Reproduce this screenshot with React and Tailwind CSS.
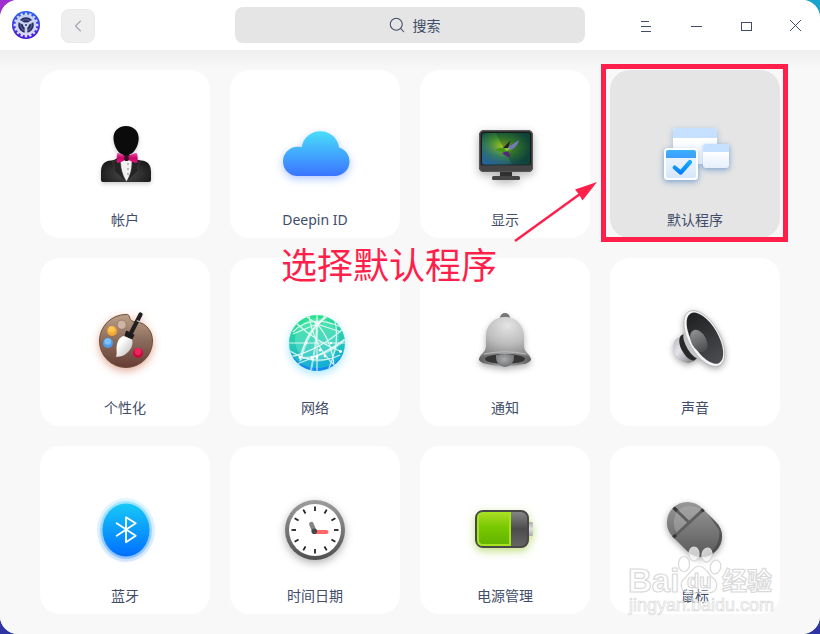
import { ChevronLeft, Search } from 'lucide-react';

const CLOCK_TICKS = Array.from({ length: 12 }, (_, i) => i * 30);
const GEAR_TEETH = Array.from({ length: 16 }, (_, i) => i * 22.5);

function AppLogo() {
  return (
    <svg viewBox="0 0 28 28" className="h-7 w-7" aria-hidden="true">
      <defs>
        <linearGradient id="logoBg" x1="0" y1="0" x2="0" y2="1">
          <stop offset="0" stopColor="#2a62f5" />
          <stop offset="1" stopColor="#4a12d8" />
        </linearGradient>
        <linearGradient id="logoGear" x1="0" y1="0" x2="0" y2="1">
          <stop offset="0" stopColor="#c3d2f2" />
          <stop offset="1" stopColor="#d9d5f4" />
        </linearGradient>
      </defs>
      <circle cx="14" cy="14" r="14" fill="url(#logoBg)" />
      {GEAR_TEETH.map((deg) => (
        <rect key={deg} x="12.8" y="1.6" width="2.4" height="3.5" fill="#d2daf5" transform={`rotate(${deg} 14 14)`} />
      ))}
      <circle cx="14" cy="14" r="9.2" fill="#252b62" stroke="url(#logoGear)" strokeWidth="2.8" />
      <circle cx="14" cy="14" r="5.5" fill="none" stroke="#535b8d" strokeWidth="1.4" />
      <path d="M14 14 L6.5 9.6 M14 14 L21.5 9.6 M14 14 V22.5" stroke="#cdd3ef" strokeWidth="2.6" />
      <circle cx="14" cy="14" r="2.8" fill="#cdd3ef" />
      <circle cx="14" cy="14" r="1.1" fill="#333b7c" />
    </svg>
  );
}

function AccountIcon() {
  return (
    <>
      <defs>
        <radialGradient id="suit" cx="0.5" cy="0.7" r="0.6">
          <stop offset="0" stopColor="#4a4a4a" />
          <stop offset="1" stopColor="#171717" />
        </radialGradient>
        <linearGradient id="bow" x1="0" y1="0" x2="0" y2="1">
          <stop offset="0" stopColor="#f54aa6" />
          <stop offset="0.5" stopColor="#c50868" />
          <stop offset="1" stopColor="#e4147f" />
        </linearGradient>
      </defs>
      <path d="M16 65 V57 C16 50 19 46 26 45.5 C31 45 34 42 36 40 H46 C48 43 51 45 56 45.5 C63 46 66 50 66 57 V65 Q66 67 64 67 H18 Q16 67 16 65Z" fill="url(#suit)" />
      <path d="M34.5 43 H48 C48 52 45.5 60 41.5 66.5 C37.5 60 35 52 34.5 43Z" fill="#f1f1f1" />
      <path d="M33 45 L27 46.5 L30 53 L28.5 55 L41 67 C37 60 35.5 53 35.5 45Z M49 45 L55 46.5 L52 53 L54 55 L41.5 67 C46 60 47 53 47 45Z" fill="#242424" stroke="#484848" strokeWidth="0.5" />
      <path d="M41 11 C49 11 54 16.5 53.7 24 C53.3 32 48 40.5 41 40.5 C34 40.5 29 32 28.5 24 C28 16.5 33 11 41 11Z" fill="#0b0b0b" />
      <path d="M32.5 38 C35.5 38.5 37.5 40 40 41 H43 C45.5 40 48 38.5 51.5 38 C53 40 53 45 52 48 C48 47.5 46 46 43 45 H40 C37.5 46.5 35 47.5 32 48 C31.5 45 31.5 41 32.5 38Z" fill="url(#bow)" />
      <rect x="39.3" y="40.5" width="4.4" height="5.4" rx="1.5" fill="#351323" />
      <g fill="#a9a9a9">
        <circle cx="43" cy="49" r="1" />
        <circle cx="43" cy="54" r="1" />
        <circle cx="43" cy="59" r="1" />
      </g>
    </>
  );
}

function CloudIcon() {
  return (
    <>
      <defs>
        <linearGradient id="cloud" x1="0" y1="17" x2="0" y2="61" gradientUnits="userSpaceOnUse">
          <stop offset="0" stopColor="#49dcfb" />
          <stop offset="1" stopColor="#3a74ff" />
        </linearGradient>
      </defs>
      <path d="M22.6 61 A14.6 14.6 0 0 1 22.6 31.8 L26.8 32 A18.8 18.8 0 0 1 64 32.4 A14.6 14.6 0 0 1 59.5 61Z" fill="url(#cloud)" />
    </>
  );
}

function DisplayIcon() {
  return (
    <>
      <defs>
        <radialGradient id="screen" cx="0.42" cy="0.45" r="0.6">
          <stop offset="0" stopColor="#a3c81e" />
          <stop offset="0.5" stopColor="#3f8a32" />
          <stop offset="1" stopColor="#134c46" />
        </radialGradient>
        <linearGradient id="screenBlue" x1="0" y1="1" x2="1" y2="0">
          <stop offset="0" stopColor="#2c68ac" stopOpacity="0.95" />
          <stop offset="0.5" stopColor="#2c68ac" stopOpacity="0" />
        </linearGradient>
      </defs>
      <rect x="35" y="55" width="12" height="7" fill="#303030" />
      <rect x="27" y="61" width="28" height="4" rx="1.5" fill="#454545" />
      <rect x="14" y="15" width="54" height="42" rx="5" fill="#393939" />
      <path d="M14 51 H68 V52 Q68 57 63 57 H19 Q14 57 14 52Z" fill="#444" />
      <rect x="14.5" y="15.5" width="53" height="41" rx="4.5" fill="none" stroke="#585858" />
      <rect x="16" y="17" width="50" height="33" rx="3" fill="#141b18" />
      <rect x="17" y="18" width="48" height="31.5" rx="2.5" fill="url(#screen)" />
      <rect x="17" y="18" width="48" height="31.5" rx="2.5" fill="url(#screenBlue)" />
      <path d="M31 18 H62.5 Q65 18 65 20.5 V47 Q65 49.5 62.5 49.5 H47Z" fill="#06301f" opacity="0.3" />
      <path d="M42 33 L54 25 C53 30 49 34 43 36Z" fill="#7379b9" />
      <path d="M38 33 L45.5 25.5 L43 33Z" fill="#241c35" />
      <path d="M29.5 36 C33 32.5 37 32 40 33.5 L46 35 L42 41 C39 38 37 36 29.5 36Z" fill="#46971c" />
      <path d="M37 38 L43 36 L45.5 42 L42 41.5Z" fill="#56247f" />
      <path d="M39 33.5 L45 33 L42 36.5Z" fill="#8fcb32" />
    </>
  );
}

function DefaultAppsIcon() {
  return (
    <>
      <defs>
        <linearGradient id="pane" x1="0" y1="0" x2="0" y2="1">
          <stop offset="0.3" stopColor="#ffffff" />
          <stop offset="1" stopColor="#e6effb" />
        </linearGradient>
        <linearGradient id="paneFront" x1="0" y1="0" x2="0" y2="1">
          <stop offset="0" stopColor="#f3f8fe" />
          <stop offset="1" stopColor="#d6e7fa" />
        </linearGradient>
        <linearGradient id="paneBar" x1="0" y1="0" x2="0" y2="1">
          <stop offset="0" stopColor="#3ab1ff" />
          <stop offset="1" stopColor="#409cff" />
        </linearGradient>
        <linearGradient id="tick" x1="0" y1="46" x2="0" y2="59" gradientUnits="userSpaceOnUse">
          <stop offset="0" stopColor="#13b0ff" />
          <stop offset="1" stopColor="#0779ff" />
        </linearGradient>
      </defs>
      <rect x="18" y="13" width="44" height="36" rx="3" fill="url(#pane)" />
      <path d="M18 23 V16 Q18 13 21 13 H59 Q62 13 62 16 V23Z" fill="#c6e0ff" />
      <g className="drop-shadow-[0_1px_2px_rgba(60,120,190,0.3)]">
        <rect x="48" y="29" width="26" height="24" rx="3" fill="url(#pane)" />
        <path d="M48 37 V32 Q48 29 51 29 H71 Q74 29 74 32 V37Z" fill="#c6e0ff" />
      </g>
      <g className="drop-shadow-[0_1px_2px_rgba(60,120,190,0.3)]">
        <rect x="9" y="33" width="34" height="32" rx="3.5" fill="#fff" />
        <rect x="11" y="35" width="30" height="28" rx="2" fill="url(#paneFront)" />
        <path d="M11 43 V37 Q11 35 13 35 H39 Q41 35 41 37 V43Z" fill="url(#paneBar)" />
      </g>
      <path d="M19.7 52.5 L25.7 57.6 L35 47" fill="none" stroke="url(#tick)" strokeWidth="4.2" strokeLinecap="round" strokeLinejoin="round" />
    </>
  );
}

function PersonalizationIcon() {
  return (
    <>
      <defs>
        <linearGradient id="palette" x1="0" y1="0" x2="0" y2="1">
          <stop offset="0" stopColor="#bb9f86" />
          <stop offset="0.5" stopColor="#8a6b5b" />
          <stop offset="1" stopColor="#663c34" />
        </linearGradient>
        <linearGradient id="bristle" x1="0" y1="0" x2="1" y2="1">
          <stop offset="0.3" stopColor="#ffffff" />
          <stop offset="1" stopColor="#b9b5b3" />
        </linearGradient>
      </defs>
      <path d="M41 11.5 C44 11 44 13 45 15.5 C46.5 19 49 18.5 52 19 C61 20 67.5 28 67.5 38 A26.5 26.5 0 1 1 41 11.5Z" fill="url(#palette)" stroke="#704e37" />
      <circle cx="36.7" cy="21.7" r="4.6" fill="#cfb4a6" stroke="#9b7c6a" />
      <circle cx="27" cy="28" r="5" fill="#f5a72f" />
      <circle cx="26.5" cy="26.5" r="3.2" fill="#ffc553" />
      <circle cx="23" cy="40" r="5" fill="#4e9eed" />
      <circle cx="22.7" cy="38.5" r="3.3" fill="#7cc0ff" />
      <circle cx="53" cy="50" r="5" fill="#c90b3c" />
      <circle cx="53" cy="48.5" r="3.4" fill="#ef2360" />
      <path d="M46.5 29 L55.5 11.5" stroke="#202020" strokeWidth="4.2" strokeLinecap="round" />
      <path d="M51.8 17.5 L55 19.2" stroke="#bdbdbd" strokeWidth="1.4" />
      <path d="M41.5 28 L49 32 L47 36 L40 32.5Z" fill="#1d1d1d" stroke="#1d1d1d" strokeLinejoin="round" />
      <path d="M38.5 33 L47 36.5 C48.5 41 46.5 45.5 43 49 C39.5 52.5 36 54 31 53.8 C32.5 50 31 47 31.8 42.5 C33 37 35 34 38.5 33Z" fill="url(#bristle)" />
    </>
  );
}

function NetworkIcon() {
  return (
    <>
      <defs>
        <linearGradient id="globe" x1="0.4" y1="0" x2="0.55" y2="1">
          <stop offset="0" stopColor="#2be38c" />
          <stop offset="0.5" stopColor="#27c9b7" />
          <stop offset="1" stopColor="#13aadc" />
        </linearGradient>
        <clipPath id="globeClip">
          <circle cx="42" cy="40" r="28" />
        </clipPath>
      </defs>
      <circle cx="42" cy="40" r="28" fill="url(#globe)" />
      <g clipPath="url(#globeClip)" fill="none" stroke="#fff" strokeWidth="1.2">
        <circle cx="42" cy="37" r="22" fill="#8df0d5" stroke="none" opacity="0.35" />
        <path d="M14 44 A28 28 0 0 0 70 44 A28.5 26 0 0 1 14 44Z" fill="#1588ef" stroke="none" />
        <g opacity="0.8">
          <path d="M14 40 H70 M42 12 V68" />
          <path d="M42 21 Q28 36 25 58 M42 21 Q56 36 59 62 M42 21 L18 31 M42 21 L66 29" />
          <path d="M34 12 Q38 42 60 63 M50 12 Q47 20 42 21 M32 14 L42 21 M52 14 L42 21" />
          <path d="M15 54 Q45 47 69 25 M22 61 Q50 51 70 36 M15 48 Q40 64 65 52" />
          <path d="M21 20 Q43 40 65 48 M18 29 Q35 10 66 24 M60 18 Q65 40 54 65" />
        </g>
        <path d="M26 57 Q31 30 52 12 M42 21 Q41 45 36 67 M25 55 Q47 56 70 37" opacity="0.6" strokeWidth="2" />
      </g>
      <g fill="#fff">
        <circle cx="42" cy="21" r="2" />
        <circle cx="31" cy="40" r="1.4" />
        <circle cx="45" cy="47" r="1.6" />
        <circle cx="25" cy="54.5" r="1.4" />
        <circle cx="37" cy="54.5" r="1.4" />
        <circle cx="42" cy="54.5" r="1.4" />
        <circle cx="50" cy="53" r="1.4" />
        <circle cx="65.5" cy="48.5" r="1.4" />
        <circle cx="56" cy="40" r="1.2" />
      </g>
    </>
  );
}

function NotificationIcon() {
  return (
    <>
      <defs>
        <radialGradient id="bell" cx="0.55" cy="0.2" r="0.85">
          <stop offset="0" stopColor="#e4e4e4" />
          <stop offset="0.5" stopColor="#bdbdbd" />
          <stop offset="1" stopColor="#777" />
        </radialGradient>
        <linearGradient id="bellLip" x1="0" y1="0" x2="1" y2="0">
          <stop offset="0" stopColor="#5f5f5f" />
          <stop offset="0.5" stopColor="#a5a5a5" />
          <stop offset="1" stopColor="#5f5f5f" />
        </linearGradient>
        <radialGradient id="clapper" cx="0.45" cy="0.4" r="0.6">
          <stop offset="0" stopColor="#a9abac" />
          <stop offset="1" stopColor="#707274" />
        </radialGradient>
      </defs>
      <circle cx="40" cy="15" r="5" fill="#777" />
      <path d="M40 14 C51 14 59 22 59 33 V43 C59 50 66 51 66 57 H14 C14 51 21 50 21 43 V33 C21 22 29 14 40 14Z" fill="url(#bell)" />
      <ellipse cx="40" cy="56.5" rx="26" ry="6.5" fill="url(#bellLip)" />
      <path d="M19 51 Q40 46.5 61 51" fill="none" stroke="#bdbdbd" />
      <ellipse cx="40" cy="56" rx="20" ry="5" fill="#353535" />
      <path d="M31 52 Q40 50 49 52 V55 A9 9 0 0 1 31 55Z" fill="url(#clapper)" />
    </>
  );
}

function SoundIcon() {
  return (
    <>
      <defs>
        <linearGradient id="magnet" x1="0" y1="0" x2="1" y2="1">
          <stop offset="0" stopColor="#b4b4ba" />
          <stop offset="0.4" stopColor="#e4e4ea" />
          <stop offset="1" stopColor="#77777d" />
        </linearGradient>
        <linearGradient id="cone" x1="0" y1="0" x2="1" y2="0">
          <stop offset="0" stopColor="#1f2022" />
          <stop offset="1" stopColor="#4c4d50" />
        </linearGradient>
        <linearGradient id="dome" x1="0" y1="0" x2="1" y2="0">
          <stop offset="0" stopColor="#8f9092" />
          <stop offset="1" stopColor="#4a4b4d" />
        </linearGradient>
      </defs>
      <path d="M25 34 C20 35 17.5 41 18.5 47 C20 54 27 60 34 60 L39 58Z" fill="url(#magnet)" />
      <path d="M26 32.5 C23 36 24 43 28 49 C31 54 35 58 39.5 57.5 L42 55 L29 31Z" fill="#28292b" />
      <path d="M32 9 C30 17 29 25 28.5 32 C27 38 36 54 42 55 C48 58 54 61 60 63Z" fill="#c6c6c9" />
      <g transform="rotate(60 49.3 35.5)">
        <ellipse cx="49.3" cy="35.5" rx="31" ry="15.5" fill="#f5f5f5" stroke="#b9b9b9" strokeWidth="0.8" />
        <ellipse cx="49.3" cy="34.8" rx="28.6" ry="13.2" fill="url(#cone)" />
      </g>
      <ellipse cx="43.8" cy="38" rx="12" ry="7.5" fill="url(#dome)" transform="rotate(62 43.8 38)" />
    </>
  );
}

function BluetoothIcon() {
  return (
    <>
      <defs>
        <linearGradient id="bt" x1="0" y1="0" x2="0" y2="1">
          <stop offset="0" stopColor="#17c9f7" />
          <stop offset="1" stopColor="#006fff" />
        </linearGradient>
      </defs>
      <ellipse cx="41" cy="39" rx="29" ry="32" fill="url(#bt)" opacity="0.13" />
      <ellipse cx="41" cy="39" rx="26" ry="29" fill="url(#bt)" opacity="0.28" />
      <ellipse cx="41" cy="39" rx="23.5" ry="26.5" fill="url(#bt)" />
      <path d="M31.7 32.3 L50.7 44.7 L41 51.3 V26.3 L50.7 32.3 L31.7 44.7" fill="none" stroke="#fff" strokeWidth="1.8" strokeLinecap="round" strokeLinejoin="round" />
    </>
  );
}

function ClockIcon() {
  return (
    <>
      <defs>
        <linearGradient id="bezel" x1="0" y1="0" x2="0" y2="1">
          <stop offset="0" stopColor="#9d9d9d" />
          <stop offset="1" stopColor="#505050" />
        </linearGradient>
      </defs>
      <circle cx="40" cy="39" r="30" fill="url(#bezel)" />
      <circle cx="40" cy="39" r="26" fill="#fff" />
      {CLOCK_TICKS.map((deg) => (
        <path key={deg} d="M40 15.5 V20" stroke="#222" strokeWidth="1.8" transform={`rotate(${deg} 40 39)`} />
      ))}
      <path d="M39.5 41 H51.5" stroke="#ff6767" strokeWidth="4" strokeLinecap="round" />
      <path d="M39.3 40 L36.3 33" stroke="#858585" strokeWidth="4.5" strokeLinecap="round" />
      <circle cx="39.3" cy="40.3" r="2.8" fill="#474747" />
    </>
  );
}

function BatteryIcon() {
  return (
    <>
      <defs>
        <linearGradient id="shell" x1="0" y1="0" x2="0" y2="1">
          <stop offset="0" stopColor="#888" />
          <stop offset="0.5" stopColor="#4c4c4c" />
          <stop offset="1" stopColor="#666" />
        </linearGradient>
        <linearGradient id="charge" x1="0" y1="0" x2="0" y2="1">
          <stop offset="0" stopColor="#a9dc24" />
          <stop offset="0.45" stopColor="#78c800" />
          <stop offset="1" stopColor="#62b400" />
        </linearGradient>
        <linearGradient id="cap" x1="0" y1="0" x2="0" y2="1">
          <stop offset="0" stopColor="#aaa" />
          <stop offset="0.5" stopColor="#e0e0e0" />
          <stop offset="1" stopColor="#aaa" />
        </linearGradient>
      </defs>
      <rect x="62" y="31" width="6" height="14" rx="1.5" fill="url(#cap)" />
      <rect x="11" y="20" width="52" height="36" rx="7" fill="url(#shell)" stroke="#484848" strokeWidth="2" />
      <path d="M46 22 H18 Q13 22 13 27 V49 Q13 54 18 54 H45Z" fill="url(#charge)" />
      <path d="M45 22 H18 Q13 22 13 27 V49 Q13 54 18 54 H45Z" fill="none" stroke="#a4e31d" strokeWidth="2" />
    </>
  );
}

function MouseIcon() {
  return (
    <>
      <defs>
        <linearGradient id="mouse" x1="0" y1="0" x2="0" y2="1">
          <stop offset="0" stopColor="#9b9b9b" />
          <stop offset="1" stopColor="#545454" />
        </linearGradient>
        <clipPath id="mouseClip">
          <rect x="9" y="18" width="61" height="41" rx="20.5" transform="rotate(45 39.5 38.5)" />
        </clipPath>
      </defs>
      <g clipPath="url(#mouseClip)">
        <rect x="8" y="8" width="64" height="62" fill="url(#mouse)" />
        <path d="M53 23 L67 37 C70 52 60 65 46 68 C60 61 66 50 64 39Z" fill="#3f3f3f" opacity="0.6" />
        <path d="M22 42 C15 32 20 15 34 15 C40 15 44 17 46 19Z" fill="#b5b5b5" opacity="0.45" />
        <path d="M17 47.5 L51 16.2 M18 16 L34.5 32" stroke="#5f5f5f" strokeWidth="3" />
        <path d="M17 47.5 L21 43.8 M46.5 20.4 L50 17.2 M18.5 16.5 L22 19.9" stroke="#373737" strokeWidth="3.2" />
      </g>
    </>
  );
}

const modules = [
  { label: '帐户', Icon: AccountIcon, shadow: 'drop-shadow-[0_2px_2px_rgba(0,0,0,0.2)]' },
  { label: 'Deepin ID', Icon: CloudIcon, shadow: 'drop-shadow-[0_3px_4px_rgba(58,116,255,0.4)]' },
  { label: '显示', Icon: DisplayIcon, shadow: 'drop-shadow-[0_3px_4px_rgba(0,0,0,0.3)]' },
  { label: '默认程序', Icon: DefaultAppsIcon, shadow: 'drop-shadow-[0_2px_3px_rgba(60,120,190,0.4)]', active: true },
  { label: '个性化', Icon: PersonalizationIcon, shadow: 'drop-shadow-[0_3px_4px_rgba(190,70,30,0.45)]' },
  { label: '网络', Icon: NetworkIcon, shadow: 'drop-shadow-[0_3px_4px_rgba(60,200,255,0.45)]' },
  { label: '通知', Icon: NotificationIcon, shadow: 'drop-shadow-[0_3px_3px_rgba(0,0,0,0.3)]' },
  { label: '声音', Icon: SoundIcon, shadow: 'drop-shadow-[0_2px_3px_rgba(0,0,0,0.35)]' },
  { label: '蓝牙', Icon: BluetoothIcon, shadow: 'drop-shadow-[0_2px_2px_rgba(0,111,255,0.15)]' },
  { label: '时间日期', Icon: ClockIcon, shadow: 'drop-shadow-[0_3px_4px_rgba(0,0,0,0.3)]' },
  { label: '电源管理', Icon: BatteryIcon, shadow: 'drop-shadow-[0_3px_4px_rgba(130,190,0,0.5)]' },
  { label: '鼠标', Icon: MouseIcon, shadow: 'drop-shadow-[0_2px_3px_rgba(0,0,0,0.35)]' },
];

function WindowButton({ label, children }) {
  return (
    <button type="button" aria-label={label} className="flex h-[50px] w-[50px] items-center justify-center">
      <svg viewBox="0 0 14 14" className="h-[14px] w-[14px]" fill="none" stroke="#414d68" shapeRendering="crispEdges">
        {children}
      </svg>
    </button>
  );
}

function TitleBar() {
  return (
    <header className="grid h-[50px] grid-cols-[1fr_350px_1fr] items-center bg-white">
      <div className="flex items-center gap-[21px] pl-3">
        <AppLogo />
        <button
          type="button"
          aria-label="返回"
          className="mt-0.5 flex h-[34px] w-[34px] items-center justify-center rounded-lg border border-[#e9e9e9] bg-[#eeeeee]"
        >
          <ChevronLeft className="h-5 w-5 text-[#a3a7b3]" strokeWidth={1.4} />
        </button>
      </div>

      <label className="flex h-9 items-center justify-center gap-[7px] rounded-lg bg-[#e5e5e5] pl-2">
        <Search className="h-[18px] w-[18px] text-[#414d68]" strokeWidth={1.4} />
        <input
          type="text"
          placeholder="搜索"
          aria-label="搜索"
          className="field-sizing-content bg-transparent text-sm text-[#414d68] outline-none placeholder:text-[#414d68]"
        />
      </label>

      <div className="flex justify-end">
        <WindowButton label="菜单">
          <path d="M3 3.5 H11 M3 8.5 H13 M3 13.5 H13" />
        </WindowButton>
        <WindowButton label="最小化">
          <path d="M3 8.5 H14" />
        </WindowButton>
        <WindowButton label="最大化">
          <rect x="3.5" y="4.5" width="10" height="8" />
        </WindowButton>
        <WindowButton label="关闭">
          <path d="M2 2 L13 13 M13 2 L2 13" shapeRendering="auto" />
        </WindowButton>
      </div>
    </header>
  );
}

function ModuleCard({ label, Icon, shadow, active }) {
  return (
    <button
      type="button"
      className={`flex h-[168px] w-full flex-col items-center rounded-[20px] pt-[45px] ${active ? 'bg-[#e5e5e5]' : 'bg-white'}`}
    >
      <svg viewBox="0 0 80 80" className={`h-20 w-20 overflow-visible ${shadow}`} aria-hidden="true">
        <Icon />
      </svg>
      <span className="mt-[15px] text-sm leading-5 text-[#414d68]">{label}</span>
    </button>
  );
}

// Red frame, arrow and caption pointing at the highlighted module
function Callout() {
  return (
    <div className="pointer-events-none text-[#ff1f4b]">
      <div className="absolute -top-[6px] -right-[8px] -bottom-[4px] -left-[9px] border-[5px] border-[#ff1f4b]" />
      <svg viewBox="0 0 84 62" className="absolute top-[111px] -left-[96px] h-[62px] w-[84px]" aria-hidden="true">
        <path d="M1 60 L66 13" stroke="currentColor" strokeWidth="2.4" />
        <path d="M83 1 L68.5 19.5 L65 13.5 L61 8.5Z" fill="currentColor" />
      </svg>
      <p className="absolute top-[176px] -left-[329px] text-4xl leading-10 whitespace-nowrap">选择默认程序</p>
    </div>
  );
}

function Watermark() {
  return (
    <svg
      viewBox="620 540 160 80"
      className="pointer-events-none absolute right-10 bottom-[14px] h-20 w-40"
      fill="#fff"
      fillOpacity="0.7"
      stroke="#d9d9d9"
      strokeWidth="1.2"
    >
      <path fillOpacity="0.3" d="M699 566 C705 566 708 574 713 578 C719 583 718 593 708 593 C702 593 696 593 690 593 C680 593 679 583 685 578 C690 574 693 566 699 566Z" />
      <ellipse cx="684" cy="564" rx="5.5" ry="7.5" />
      <ellipse cx="694" cy="554" rx="5" ry="7" />
      <ellipse cx="707" cy="555" rx="5" ry="7" transform="rotate(10 707 555)" />
      <ellipse cx="715.5" cy="567" rx="5.2" ry="7" transform="rotate(15 715.5 567)" />
      <g className="font-['Liberation_Sans','Noto_Sans_CJK_SC',sans-serif] font-bold">
        <text x="628" y="592" fontSize="33">Bai</text>
        <text x="687" y="588" fontSize="20">du</text>
        <text x="722" y="590" fontSize="25">经验</text>
      </g>
      <text x="629" y="611" fontSize="18" strokeWidth="0.7" fillOpacity="0.4" className="font-['Liberation_Sans',sans-serif]">
        jingyan.baidu.com
      </text>
    </svg>
  );
}

export default function App() {
  return (
    <div className="min-h-screen bg-[linear-gradient(to_top,#2f35a5_20%,transparent_60%),linear-gradient(to_right,#a02fd0,#16a6d0)] font-['Noto_Sans','Noto_Sans_CJK_SC',sans-serif]">
      <div className="relative min-h-screen overflow-hidden rounded-[18px] bg-[#f8f8f8]">
        <TitleBar />
        <main className="bg-linear-to-b from-[#efefef] to-[#f8f8f8] to-[20px] px-10 py-5">
          <ul className="grid grid-cols-4 gap-5">
            {modules.map((item) => (
              <li key={item.label} className={item.active ? 'relative z-10' : ''}>
                <ModuleCard {...item} />
                {item.active && <Callout />}
              </li>
            ))}
          </ul>
        </main>
        <Watermark />
      </div>
    </div>
  );
}
